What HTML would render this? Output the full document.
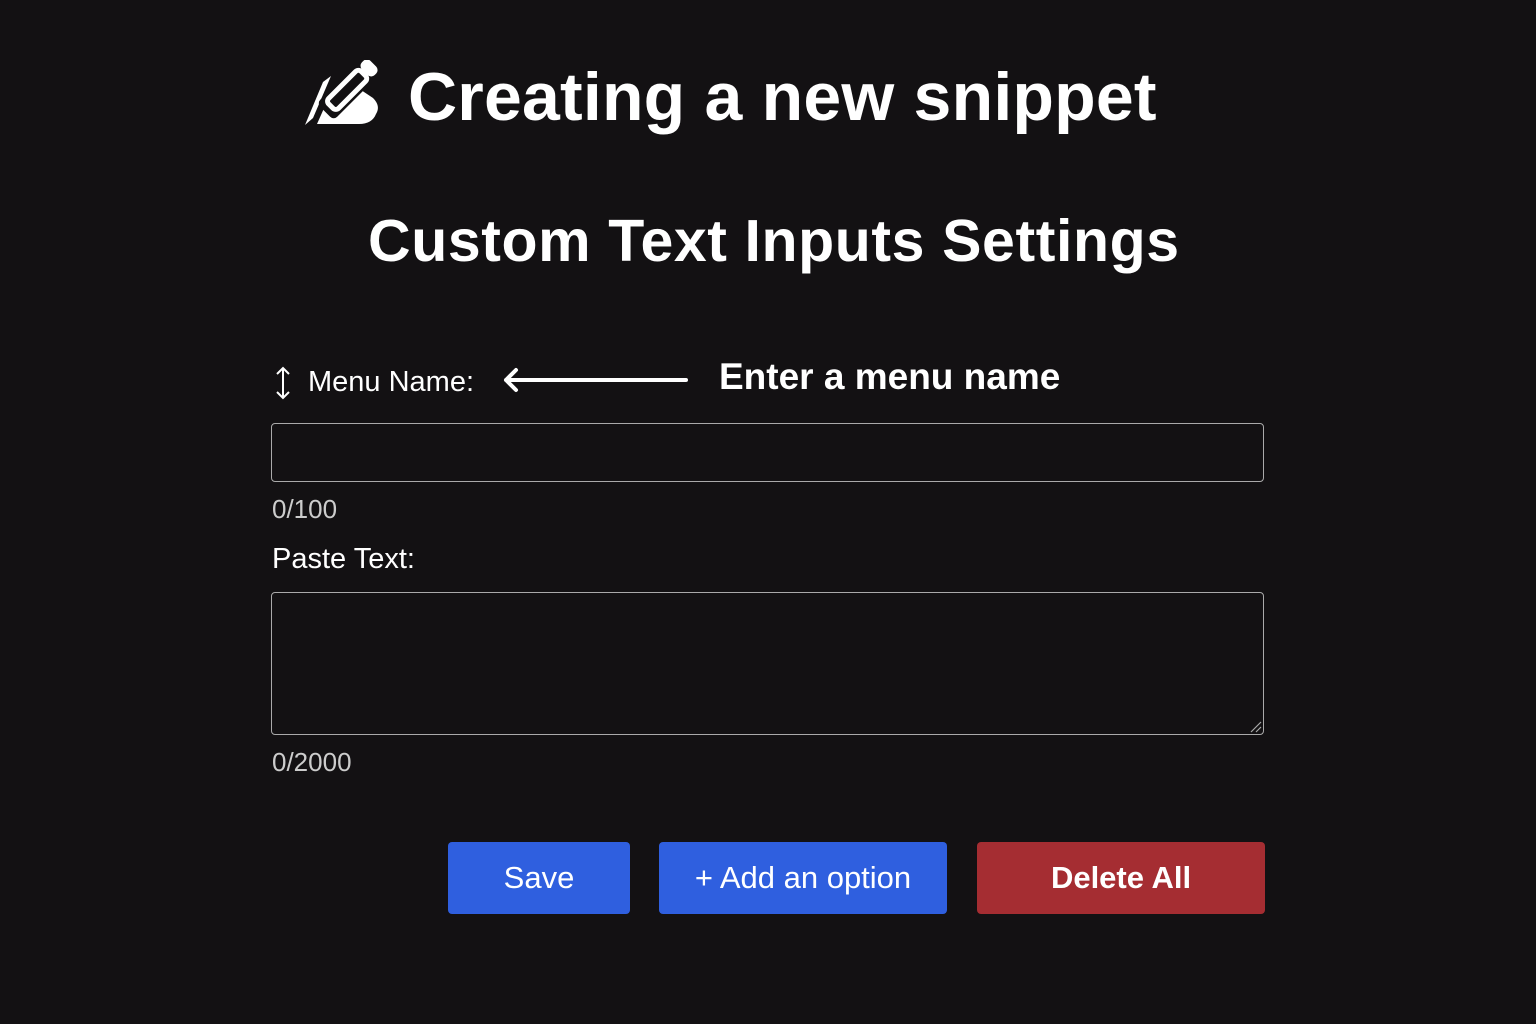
<!DOCTYPE html>
<html><head><meta charset="utf-8"><style>
html,body{margin:0;padding:0;background:#131113;width:1536px;height:1024px;overflow:hidden;font-family:"Liberation Sans",sans-serif;color:#fff}
.a{position:absolute;white-space:nowrap}
</style></head><body>
<svg class="a" style="left:303px;top:60px" width="78" height="68" viewBox="0 0 78 68">
<path d="M2 65 L20 22 L28 16 L10 58 Z" fill="#fff"/>
<path d="M14 64 L22 46 L46 22 L70 38 Q78 46 73 54 Q69 64 56 64 Z" fill="#fff"/>
<g transform="rotate(45 42 32)">
<rect x="30" y="-2" width="24" height="62" rx="5" fill="#131113"/>
<rect x="35" y="6" width="14" height="46" rx="4" fill="#131113" stroke="#fff" stroke-width="5"/>
<rect x="33" y="-8" width="18" height="12" rx="5" fill="#fff"/>
</g>
</svg>
<div class="a" style="left:408px;top:58px;font-size:68px;font-weight:bold;letter-spacing:0.2px">Creating a new snippet</div>
<div class="a" style="left:368px;top:207px;font-size:59px;font-weight:bold;letter-spacing:0.6px">Custom Text Inputs Settings</div>
<svg class="a" style="left:273px;top:366px" width="20" height="34" viewBox="0 0 20 34"><path d="M10 2 V32 M4 8 L10 2 L16 8 M4 26 L10 32 L16 26" stroke="#fff" stroke-width="2" fill="none"/></svg>
<div class="a" style="left:308px;top:366px;font-size:29px">Menu Name:</div>
<svg class="a" style="left:500px;top:366px" width="190" height="28" viewBox="0 0 190 28"><path d="M6 14 H186 M16 4 L6 14 L16 24" stroke="#fff" stroke-width="4" fill="none" stroke-linecap="round" stroke-linejoin="round"/></svg>
<div class="a" style="left:719px;top:356px;font-size:37px;font-weight:bold">Enter a menu name</div>
<div class="a" style="left:271px;top:423px;width:991px;height:57px;border:1.5px solid #aaa;border-radius:4px"></div>
<div class="a" style="left:272px;top:494px;font-size:26px;color:#ccc">0/100</div>
<div class="a" style="left:272px;top:543px;font-size:29px">Paste Text:</div>
<div class="a" style="left:271px;top:592px;width:991px;height:141px;border:1.5px solid #aaa;border-radius:4px"></div>
<svg class="a" style="left:1250px;top:721px" width="12" height="12"><path d="M1 11 L11 1 M6 11 L11 6" stroke="#aaa" stroke-width="1.2"/></svg>
<div class="a" style="left:272px;top:747px;font-size:26px;color:#ccc">0/2000</div>
<div class="a" style="left:448px;top:842px;width:182px;height:72px;background:#2f5fdf;border-radius:4px;font-size:31px;line-height:72px;text-align:center">Save</div>
<div class="a" style="left:659px;top:842px;width:288px;height:72px;background:#2f5fdf;border-radius:4px;font-size:31px;line-height:72px;text-align:center">+ Add an option</div>
<div class="a" style="left:977px;top:842px;width:288px;height:72px;background:#a52d32;border-radius:4px;font-size:31px;font-weight:bold;line-height:72px;text-align:center">Delete All</div>
</body></html>
